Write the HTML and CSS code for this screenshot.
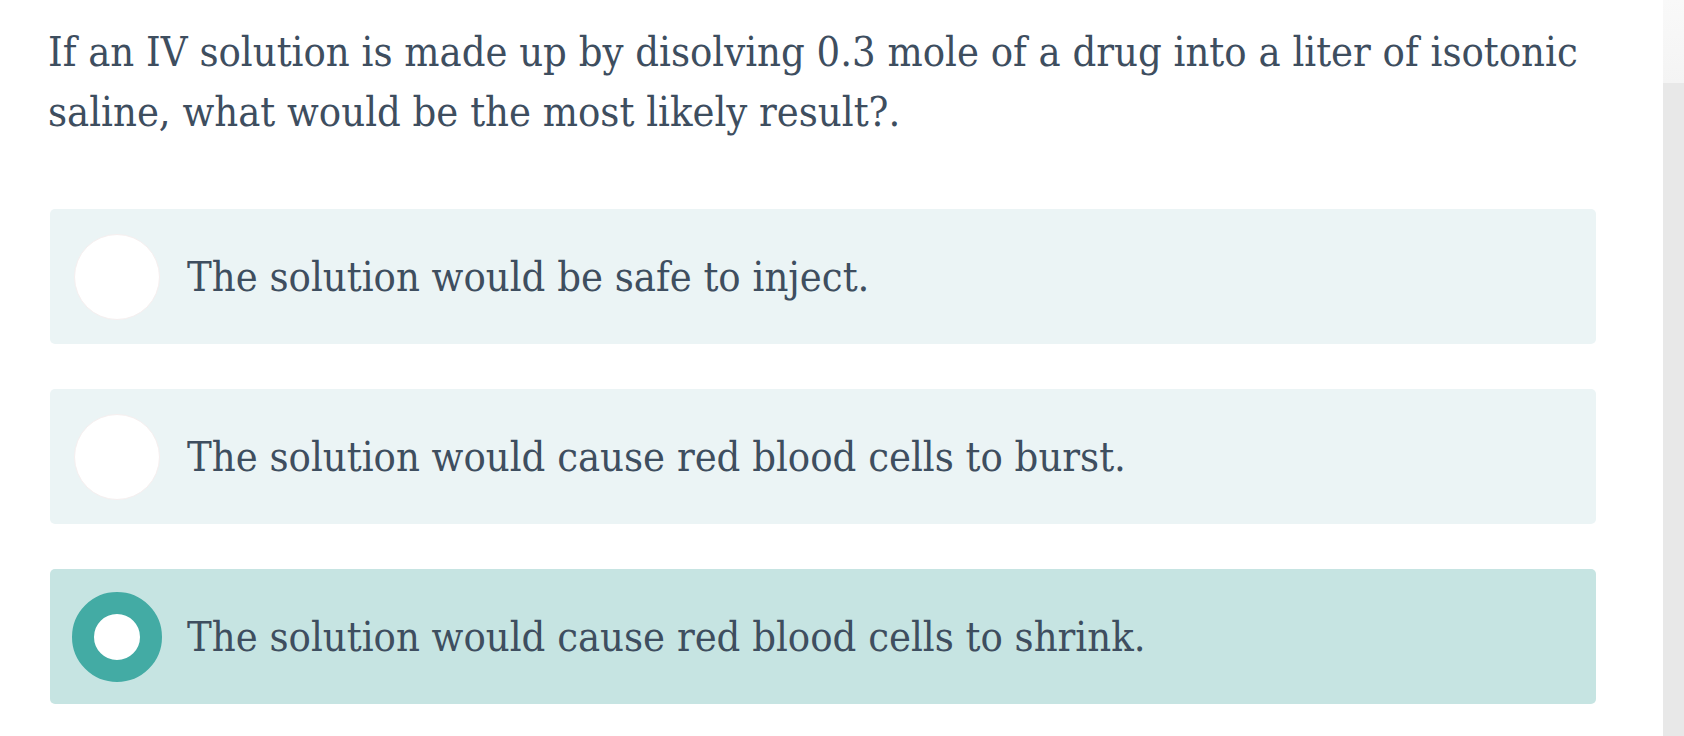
FILE: index.html
```html
<!DOCTYPE html>
<html>
<head>
<meta charset="utf-8">
<link rel="stylesheet" href="styles.css">
</head>
<body>
<div class="page">
  <main class="quiz">
    <p class="question">If an IV solution is made up by disolving 0.3 mole of a drug into a liter of isotonic saline, what would be the most likely result?.</p>
    <div class="options">
      <label class="option">
        <span class="radio"></span>
        <span class="option-text">The solution would be safe to inject.</span>
      </label>
      <label class="option">
        <span class="radio"></span>
        <span class="option-text">The solution would cause red blood cells to burst.</span>
      </label>
      <label class="option option-selected">
        <span class="radio radio-checked"></span>
        <span class="option-text">The solution would cause red blood cells to shrink.</span>
      </label>
    </div>
  </main>
  <aside class="scroll-strip">
    <div class="scroll-top"></div>
  </aside>
</div>
</body>
</html>
```
FILE: styles.css
```css
html, body {
  margin: 0;
  padding: 0;
  background: #ffffff;
}

.page {
  display: flex;
  height: 736px;
  overflow: hidden;
}

.quiz {
  flex: 0 0 1663px;
  box-sizing: border-box;
  padding: 22px 67px 0 50px;
  font-family: "DejaVu Serif Condensed", "DejaVu Serif", serif;
  color: #3e4e5f;
}

.question {
  margin: 0 0 67px -2px;
  font-size: 41.3px;
  line-height: 60px;
  max-width: 1560px;
}

.options {
  display: flex;
  flex-direction: column;
  gap: 45px;
}

.option {
  display: flex;
  align-items: center;
  gap: 26px;
  height: 135px;
  box-sizing: border-box;
  padding-left: 23px;
  background: #ebf4f5;
  border-radius: 5px;
}

.option-selected {
  background: #c6e4e2;
}

.radio {
  flex: 0 0 auto;
  box-sizing: border-box;
  width: 86px;
  height: 86px;
  margin: 0 1px;
  border-radius: 50%;
  background: #ffffff;
  border: 1px solid #f6efef;
}

.radio-checked {
  width: 90px;
  height: 90px;
  margin: 0 -1px;
  border: 22px solid #43aba4;
}

.option-text {
  font-size: 41.3px;
  line-height: 58px;
}

.scroll-strip {
  flex: 1 1 auto;
  background: #e8e8e8;
}

.scroll-top {
  height: 83px;
  background: linear-gradient(180deg, #f9f9f9 0%, #f4f4f4 100%);
}
```
